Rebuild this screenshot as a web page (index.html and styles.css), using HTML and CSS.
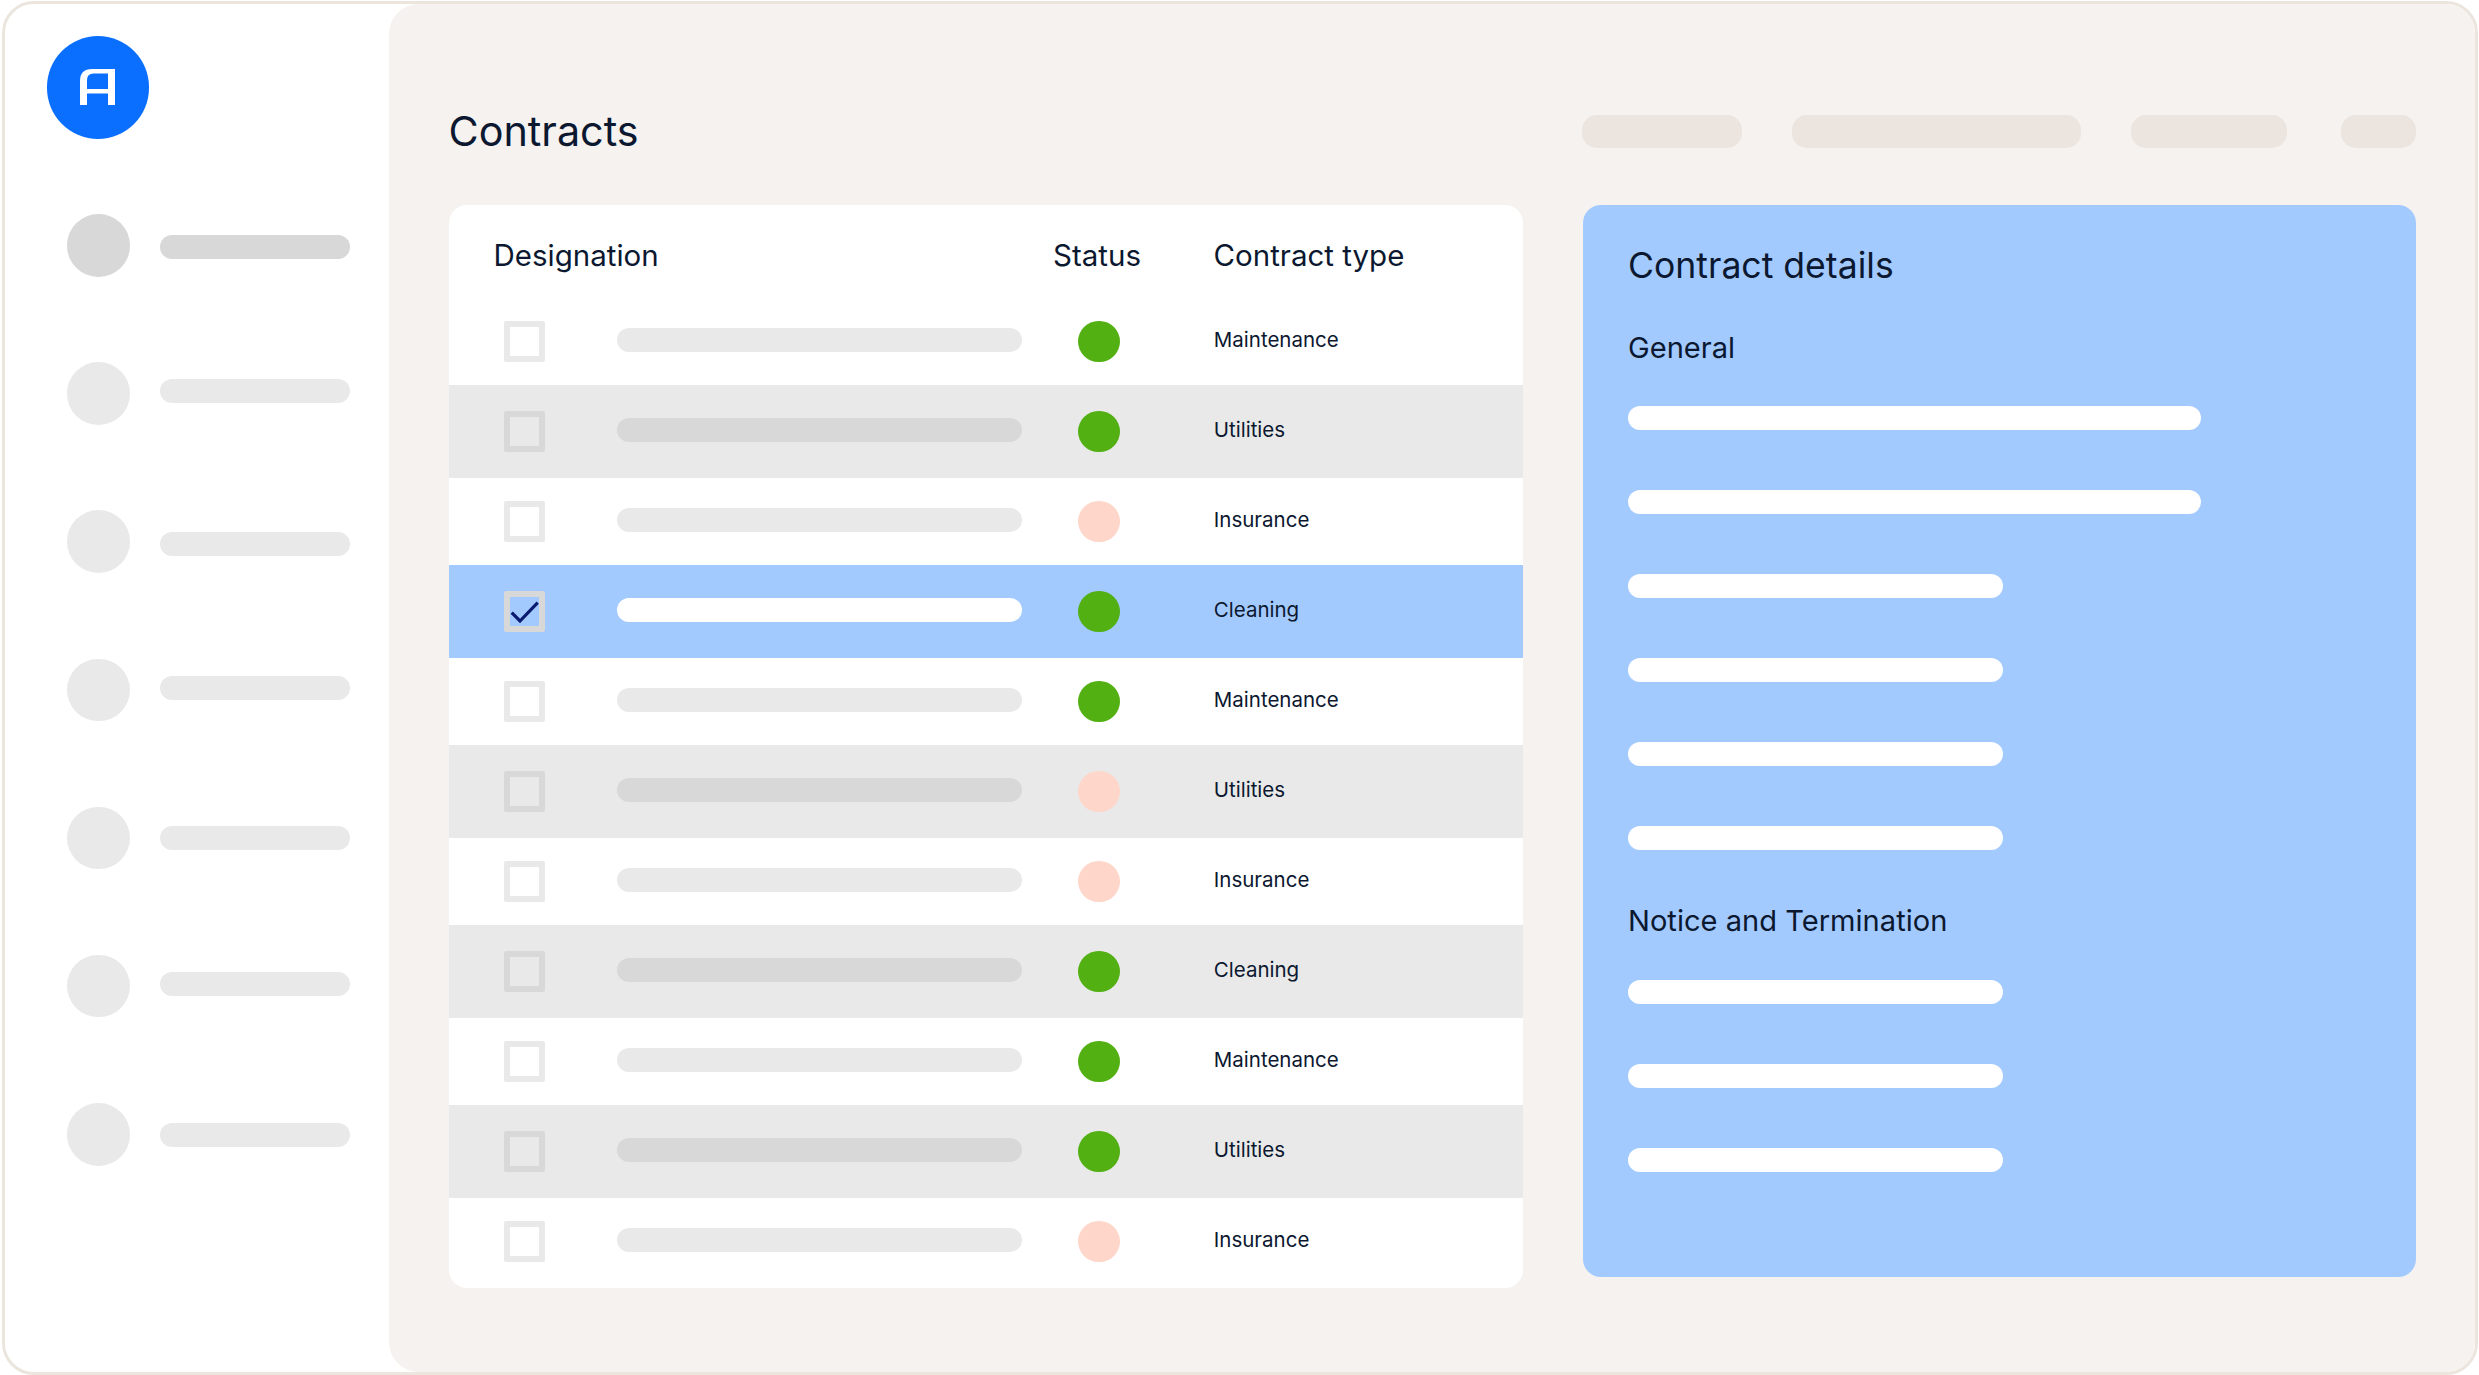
FILE: index.html
```html
<!DOCTYPE html>
<html lang="en">
<head>
<meta charset="utf-8">
<title>Contracts</title>
<link rel="stylesheet" href="styles.css">
</head>
<body>
<div class="frame">
  <aside class="sidebar">
    <div class="logo">
      <svg class="logo-mark" viewBox="0 0 35 36" width="35" height="36"><path fill="#fff" fill-rule="evenodd" d="M0 36V12Q0 0 12 0H35V36H28V24.5H7V36ZM7 20H28V4.500H13.500Q7 4.500 7 11Z"/></svg>
    </div>
    <nav class="nav">
      <div class="nav-item active"><span class="nav-dot"></span><span class="nav-bar"></span></div>
      <div class="nav-item"><span class="nav-dot"></span><span class="nav-bar"></span></div>
      <div class="nav-item"><span class="nav-dot"></span><span class="nav-bar"></span></div>
      <div class="nav-item"><span class="nav-dot"></span><span class="nav-bar"></span></div>
      <div class="nav-item"><span class="nav-dot"></span><span class="nav-bar"></span></div>
      <div class="nav-item"><span class="nav-dot"></span><span class="nav-bar"></span></div>
      <div class="nav-item"><span class="nav-dot"></span><span class="nav-bar"></span></div>
    </nav>
  </aside>
  <main class="main">
    <header class="topbar">
      <h1 class="page-title">Contracts</h1>
      <div class="pills">
        <span class="pill pill-a"></span>
        <span class="pill pill-b"></span>
        <span class="pill pill-c"></span>
        <span class="pill pill-d"></span>
      </div>
    </header>
    <div class="content">
      <section class="table">
        <div class="thead">
          <span class="th th-name">Designation</span>
          <span class="th th-status">Status</span>
          <span class="th th-type">Contract type</span>
        </div>
        <div class="row"><span class="check"></span><span class="cell-bar"></span><span class="dot ok"></span><span class="type">Maintenance</span></div>
        <div class="row shaded"><span class="check"></span><span class="cell-bar"></span><span class="dot ok"></span><span class="type">Utilities</span></div>
        <div class="row"><span class="check"></span><span class="cell-bar"></span><span class="dot warn"></span><span class="type">Insurance</span></div>
        <div class="row selected"><span class="check"><svg class="tick" viewBox="0 0 29 29" width="29" height="29"><path d="M1.700 15.700L10 24L27.700 5.700" fill="none" stroke="#0b1a6e" stroke-width="3.200"/></svg></span><span class="cell-bar"></span><span class="dot ok"></span><span class="type">Cleaning</span></div>
        <div class="row"><span class="check"></span><span class="cell-bar"></span><span class="dot ok"></span><span class="type">Maintenance</span></div>
        <div class="row shaded"><span class="check"></span><span class="cell-bar"></span><span class="dot warn"></span><span class="type">Utilities</span></div>
        <div class="row"><span class="check"></span><span class="cell-bar"></span><span class="dot warn"></span><span class="type">Insurance</span></div>
        <div class="row shaded"><span class="check"></span><span class="cell-bar"></span><span class="dot ok"></span><span class="type">Cleaning</span></div>
        <div class="row"><span class="check"></span><span class="cell-bar"></span><span class="dot ok"></span><span class="type">Maintenance</span></div>
        <div class="row shaded"><span class="check"></span><span class="cell-bar"></span><span class="dot ok"></span><span class="type">Utilities</span></div>
        <div class="row last"><span class="check"></span><span class="cell-bar"></span><span class="dot warn"></span><span class="type">Insurance</span></div>
      </section>
      <section class="details">
        <h2 class="details-title">Contract details</h2>
        <h3 class="group-title first">General</h3>
        <div class="lines">
          <span class="line long"></span>
          <span class="line long"></span>
          <span class="line"></span>
          <span class="line"></span>
          <span class="line"></span>
          <span class="line"></span>
        </div>
        <h3 class="group-title">Notice and Termination</h3>
        <div class="lines">
          <span class="line"></span>
          <span class="line"></span>
          <span class="line"></span>
        </div>
      </section>
    </div>
  </main>
</div>
</body>
</html>
```

FILE: styles.css
```css
* { box-sizing: border-box; }

body {
  margin: 0;
  background: #fff;
  font-family: Inter, "Liberation Sans", sans-serif;
  color: #0b1830;
}

.frame {
  display: flex;
  width: 2476px;
  height: 1374px;
  margin: 1px 0 0 2px;
  border: 3px solid #ece5de;
  border-radius: 32px;
  overflow: hidden;
  background: #fff;
}

.sidebar {
  flex: 0 0 384px;
  padding: 32px 0 0 41.500px;
}

.logo {
  display: flex;
  align-items: center;
  justify-content: center;
  width: 102.500px;
  height: 102.500px;
  border-radius: 50%;
  background: #0a6fff;
}

.logo-mark { display: block; }

.nav {
  margin: 75.500px 0 0 20.500px;
}

.nav-item {
  display: flex;
  align-items: flex-start;
  height: 148.200px;
}

.nav-dot {
  flex: 0 0 62.500px;
  height: 62.500px;
  border-radius: 50%;
  background: #e9e9e9;
}

.nav-bar {
  flex: 0 0 190px;
  height: 24px;
  margin-left: 30.500px;
  border-radius: 12px;
  background: #e9e9e9;
}

.nav-item.active .nav-dot,
.nav-item.active .nav-bar { background: #d8d8d8; }

.nav-item:nth-child(1) .nav-bar { margin-top: 20.500px; }
.nav-item:nth-child(2) .nav-bar { margin-top: 16.500px; }
.nav-item:nth-child(3) .nav-bar { margin-top: 21.500px; }
.nav-item:nth-child(4) .nav-bar { margin-top: 17px; }
.nav-item:nth-child(5) .nav-bar { margin-top: 19.500px; }
.nav-item:nth-child(6) .nav-bar { margin-top: 17.500px; }
.nav-item:nth-child(7) .nav-bar { margin-top: 19.500px; }

.main {
  flex: 1;
  min-width: 0;
  padding: 110.500px 59px 0 59.500px;
  background: #f5f2ef;
  border-radius: 30px 0 0 30px;
}

.topbar {
  display: flex;
  align-items: center;
  height: 33.500px;
}

.page-title {
  margin: 0;
  font-size: 41.300px;
  font-weight: 400;
  line-height: 50px;
}

.pills {
  display: flex;
  gap: 50.400px;
  margin-left: auto;
}

.pill {
  height: 33.500px;
  border-radius: 15px;
  background: #ebe4df;
}

.pill-a { width: 159.200px; }
.pill-b { width: 288.600px; }
.pill-c { width: 156px; }
.pill-d { width: 75px; margin-left: 3.600px; }

.content {
  display: flex;
  align-items: flex-start;
  gap: 60px;
  margin-top: 56.500px;
}

.table {
  flex: 0 0 1074px;
  overflow: hidden;
  border-radius: 18px;
  background: #fff;
}

.thead {
  display: flex;
  align-items: center;
  height: 93.500px;
  padding-top: 7px;
}

.th {
  font-size: 29.500px;
  line-height: 36px;
}

.th-name { margin-left: 45px; width: 559.500px; }
.th-status { width: 160.500px; }

.row {
  display: flex;
  align-items: center;
  height: 87px;
  padding-left: 55.500px;
}

.row.shaded { height: 93px; background: #e9e9e9; }
.row.selected { height: 93px; background: #a3caff; }
.row.last { height: 90px; padding-bottom: 3px; }

.check {
  flex: 0 0 41px;
  height: 41px;
  border: 6px solid #e9e9e9;
  border-radius: 2px;
}

.shaded .check,
.selected .check { border-color: #d8d8d8; }

.tick {
  display: block;
  overflow: visible;
}

.cell-bar {
  flex: 0 0 405px;
  height: 24px;
  margin: -3px 0 0 71.800px;
  border-radius: 12px;
  background: #e9e9e9;
}

.shaded .cell-bar { background: #d8d8d8; }
.selected .cell-bar { background: #fff; }

.dot {
  flex: 0 0 41.500px;
  height: 41.500px;
  margin-left: 56.500px;
  border-radius: 50%;
}

.dot.ok { background: #52b013; }
.dot.warn { background: #ffd6ca; }

.type {
  margin: -3px 0 0 94px;
  font-size: 20.500px;
  line-height: 28px;
}

.details {
  flex: 1;
  height: 1072px;
  padding: 41px 0 0 45.500px;
  border-radius: 18px;
  background: #a3caff;
}

.details-title {
  margin: 0;
  font-size: 35.600px;
  font-weight: 400;
  line-height: 40px;
}

.group-title {
  margin: 53.700px 0 40.700px;
  font-size: 29.100px;
  font-weight: 400;
  line-height: 36px;
}

.group-title.first { margin: 44px 0 40.300px; }

.lines {
  display: flex;
  flex-direction: column;
  gap: 60px;
}

.line {
  width: 375px;
  height: 24px;
  border-radius: 12px;
  background: #fff;
}

.line.long { width: 573px; }
```
